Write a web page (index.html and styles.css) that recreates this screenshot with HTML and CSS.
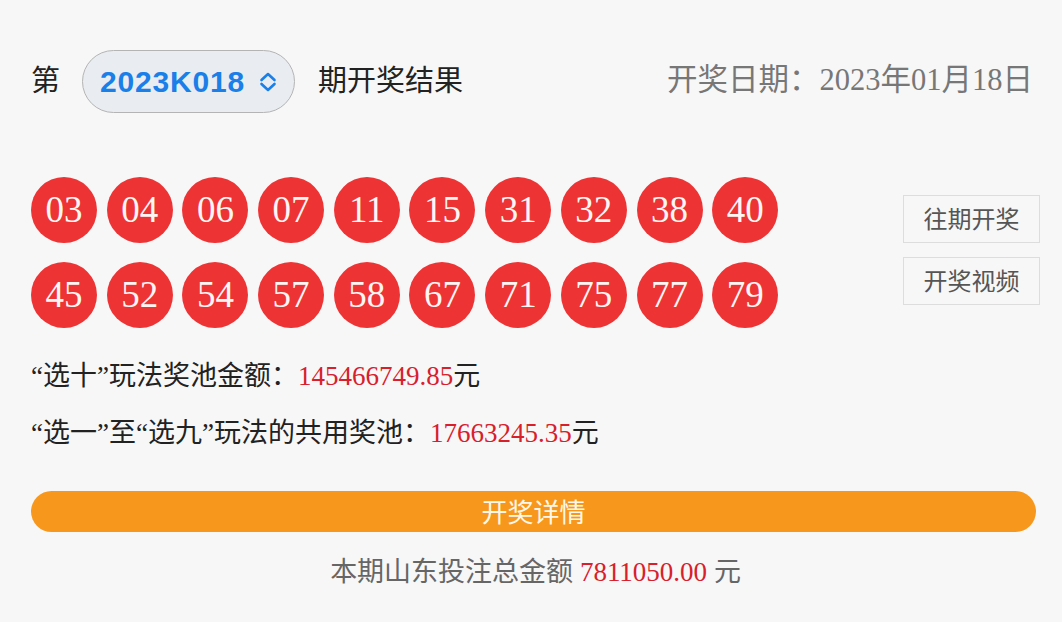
FILE: index.html
```html
<!DOCTYPE html>
<html lang="zh-CN">
<head>
<meta charset="utf-8">
<title>开奖结果</title>
<link rel="stylesheet" href="styles.css">
</head>
<body>
<div class="page">
  <header class="head">
    <div class="issue">
      <span class="issue-label">第</span>
      <div class="select">
        <span class="select-value">2023K018</span>
        <svg class="chev" viewBox="0 0 18 20" width="18" height="20" aria-hidden="true">
          <path d="M2.5 8 L9 2 L15.5 8" fill="none" stroke="#1a7fe8" stroke-width="2.6" stroke-linecap="round" stroke-linejoin="round"/>
          <path d="M2.5 12 L9 18 L15.5 12" fill="none" stroke="#1a7fe8" stroke-width="2.6" stroke-linecap="round" stroke-linejoin="round"/>
        </svg>
      </div>
      <span class="issue-label">期开奖结果</span>
    </div>
    <div class="date">开奖日期：2023年01月18日</div>
  </header>

  <section class="draw">
    <div class="balls">
      <span class="ball">03</span><span class="ball">04</span><span class="ball">06</span><span class="ball">07</span><span class="ball">11</span>
      <span class="ball">15</span><span class="ball">31</span><span class="ball">32</span><span class="ball">38</span><span class="ball">40</span>
      <span class="ball">45</span><span class="ball">52</span><span class="ball">54</span><span class="ball">57</span><span class="ball">58</span>
      <span class="ball">67</span><span class="ball">71</span><span class="ball">75</span><span class="ball">77</span><span class="ball">79</span>
    </div>
    <div class="links">
      <a class="link-btn">往期开奖</a>
      <a class="link-btn">开奖视频</a>
    </div>
  </section>

  <p class="pool">“选十”玩法奖池金额：<span class="money">145466749.85</span>元</p>
  <p class="pool">“选一”至“选九”玩法的共用奖池：<span class="money">17663245.35</span>元</p>

  <div class="detail">开奖详情</div>

  <p class="total">本期山东投注总金额 <span class="money">7811050.00</span> 元</p>
</div>
</body>
</html>
```

FILE: styles.css
```css
html, body {
  margin: 0;
  padding: 0;
  background: #f7f7f7;
}

.page {
  width: 1062px;
  height: 622px;
  box-sizing: border-box;
  padding: 50px 22px 0 31px;
  font-family: "Liberation Serif", "Noto Sans CJK SC", serif;
  color: #222;
  overflow: hidden;
}

.head {
  display: flex;
  justify-content: space-between;
  align-items: center;
  height: 63px;
}

.issue {
  display: flex;
  align-items: center;
  font-family: "Noto Sans CJK SC", "Liberation Sans", sans-serif;
  font-size: 29px;
  color: #222;
}

.issue-label {
  margin-bottom: 8px;
}

.select {
  display: flex;
  align-items: center;
  box-sizing: border-box;
  height: 63px;
  width: 213px;
  margin: 0 23px 0 22px;
  padding: 0 0 0 17px;
  border: 1.5px solid #b4b4b4;
  border-radius: 32px;
  background: #e9ecf0;
}

.select-value {
  font-family: "Liberation Sans", Arial, sans-serif;
  font-weight: bold;
  font-size: 30px;
  letter-spacing: 0.8px;
  color: #1a7fe8;
}

.chev {
  margin-left: 14px;
  margin-top: 1px;
}

.date {
  font-size: 30.5px;
  color: #777;
  margin-right: 7px;
  margin-top: -9px;
}

.draw {
  display: flex;
  justify-content: space-between;
  margin-top: 64px;
}

.balls {
  display: grid;
  grid-template-columns: repeat(10, 66px);
  column-gap: 9.7px;
  row-gap: 19px;
}

.ball {
  width: 66px;
  height: 66px;
  border-radius: 50%;
  background: #ee3335;
  color: #fff6f4;
  font-family: "Liberation Serif", serif;
  font-size: 37px;
  line-height: 66px;
  text-align: center;
}

.links {
  display: flex;
  flex-direction: column;
  gap: 14px;
  margin-top: 18px;
}

.link-btn {
  display: block;
  box-sizing: border-box;
  width: 137px;
  height: 48px;
  border: 1.5px solid #dddddd;
  background: #f7f7f7;
  font-family: "Noto Sans CJK SC", sans-serif;
  font-size: 24px;
  line-height: 44px;
  text-align: center;
  color: #555;
}

.pool {
  margin: 0;
  font-size: 27px;
  line-height: 40px;
  color: #222;
}

.pool:first-of-type {
  margin-top: 28px;
}

.pool + .pool {
  margin-top: 17px;
}

.money {
  color: #d7202c;
}

.detail {
  margin: 38px 4px 0 0;
  height: 41px;
  border-radius: 21px;
  background: #f7981d;
  color: #fff8ea;
  font-family: "Noto Sans CJK SC", sans-serif;
  font-size: 26px;
  line-height: 39px;
  text-align: center;
}

.total {
  margin: 20px 0 0;
  font-size: 27px;
  line-height: 40px;
  text-align: center;
  color: #666;
}
```
